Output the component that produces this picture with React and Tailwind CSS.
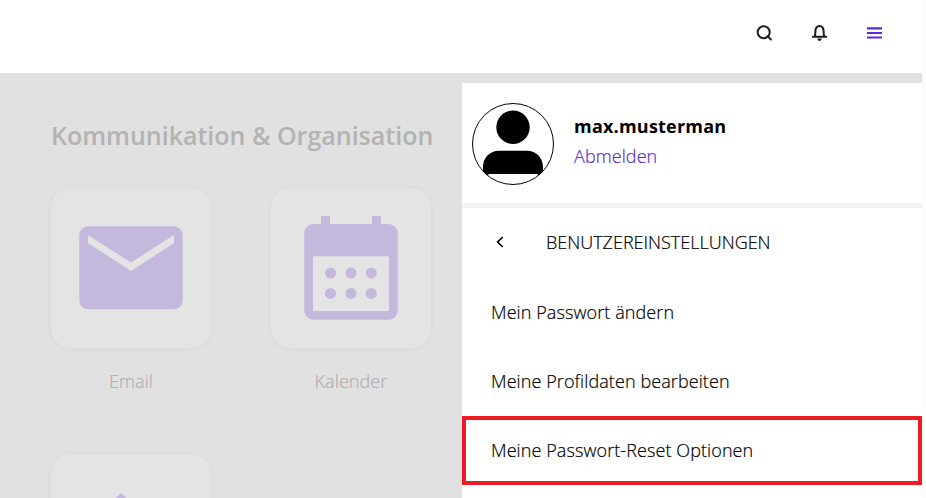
function Tile({ label, children }) {
  return (
    <div className="flex w-40 flex-col items-center">
      <div className="h-40 w-40 shrink-0 rounded-[20px] bg-[#e4e4e4] shadow-[0_1px_6px_rgba(0,0,0,0.045)]">
        <svg viewBox="0 0 160 160" className="h-40 w-40" fill="#c4b8dd">
          {children}
        </svg>
      </div>
      <span className="mt-5 text-[18px] font-light leading-[27px] tracking-[0.08px] text-[#b0b0b0] [-webkit-text-stroke:0.2px]">
        {label}
      </span>
    </div>
  );
}

function MenuRow({ label, highlighted }) {
  return (
    <li
      className={
        highlighted
          ? "flex h-[69px] items-center border-4 border-[#ed1c24] pl-[25px]"
          : "flex h-[69px] items-center pl-[29px]"
      }
    >
      <a className="whitespace-nowrap tracking-[0.09px]">{label}</a>
    </li>
  );
}

export default function App() {
  return (
    <div className="flex h-[498px] w-[926px] overflow-hidden bg-[#fcfcfc] font-['Open_Sans','Noto_Sans',sans-serif] text-black">
      <div className="flex w-[922px] flex-col bg-white">
        <header className="flex h-[73px] shrink-0 items-start justify-end pr-[39px] pt-[24px]">
          <div className="flex gap-[37px]">
            <svg viewBox="0 0 18 18" className="h-[18px] w-[18px]" fill="none" stroke="#1d1d1f" strokeWidth="2">
              <circle cx="8.7" cy="8.2" r="6" />
              <path d="M12.7 12.3l3.2 3.2" strokeLinecap="round" />
            </svg>
            <svg viewBox="0 0 18 18" className="h-[18px] w-[18px]" fill="none" stroke="#1d1d1f" strokeWidth="2">
              <path d="M2.8 12.8h13.4M4.6 12.6c.7-1.1.8-2.2.8-5C5.400 4 6.700 1.900 9.500 1.900s4.100 2.100 4.100 5.700c0 2.800.1 3.900.8 5" strokeLinecap="round" strokeLinejoin="round" />
              <path d="M7.300 14.600h4.400c-.2 1.600-1 2.400-2.200 2.400s-2-.8-2.200-2.400z" fill="#1d1d1f" stroke="none" />
            </svg>
            <svg viewBox="0 0 18 18" className="h-[18px] w-[18px]" fill="#5a2bd8">
              <path d="M2 3.300h15v2.100H2zM2 7.900h15v2.100H2zM2 12.500h15v2.100H2z" />
            </svg>
          </div>
        </header>

        <main className="flex h-[425px] bg-[#e1e1e1]">
          <section className="h-[425px] w-[462px] shrink-0 overflow-hidden pl-[51px] pt-[44px]">
            <h2 className="whitespace-nowrap text-[25px] font-semibold leading-[36px] text-[#b3b3b3]">
              Kommunikation &amp; Organisation
            </h2>
            <div className="mt-[35px] grid grid-cols-[160px_160px] gap-x-[60px] gap-y-[59px]">
              <Tile label="Email">
                <rect x="28.300" y="38.300" width="103.400" height="83" rx="9" />
                <path d="M37 47l43 27.500L123 47v8L80 83 37 55z" fill="#e4e4e4" />
              </Tile>
              <Tile label="Kalender">
                <path d="M50 28h9v10h-9zM101 28h9v10h-9z" />
                <rect x="33.300" y="36" width="93.400" height="95.700" rx="9" />
                <path d="M42 68.300h76V123H42z" fill="#e4e4e4" />
                <circle cx="59.500" cy="85" r="5.500" />
                <circle cx="80" cy="85" r="5.500" />
                <circle cx="100.300" cy="85" r="5.500" />
                <circle cx="59.500" cy="105.400" r="5.500" />
                <circle cx="80" cy="105.400" r="5.500" />
                <circle cx="100.300" cy="105.400" r="5.500" />
              </Tile>
              <Tile label="">
                <path d="M70 38.800l50 50-50 50-50-50z" />
              </Tile>
            </div>
          </section>

          <aside className="mt-[10px] h-[415px] w-[460px] bg-white text-[18px] font-light leading-[27px] [-webkit-text-stroke:0.2px]">
            <div className="flex h-[125px] border-b-[5px] border-[#f4f4f4] pl-[10px] pt-5">
              <svg viewBox="0 0 82 82" className="h-[82px] w-[82px] shrink-0">
                <circle cx="41" cy="41" r="40.500" fill="#fff" stroke="#000" />
                <circle cx="41" cy="24.300" r="16.700" />
                <path d="M11 68V64c0-9.500 7-16.300 16-16.300h28c9 0 16 6.800 16 16.300v4L67 72.500 65 71H17l-2 1.500z" />
              </svg>
              <div className="ml-5 mt-2 flex flex-col">
                <span className="font-bold leading-[30px] tracking-[0.22px] [-webkit-text-stroke:0]">max.musterman</span>
                <a className="leading-[30px] tracking-[0.09px] text-[#5a2bd8]">Abmelden</a>
              </div>
            </div>
            <nav>
              <div className="flex h-[70px] items-center pl-[34px]">
                <svg viewBox="0 0 8 12" className="mb-[2px] h-3 w-2" fill="none" stroke="#000" strokeWidth="1.7">
                  <path d="M6.700 1L1.600 6l5.100 5" />
                </svg>
                <span className="mb-[2px] ml-[42px]">BENUTZEREINSTELLUNGEN</span>
              </div>
              <ul>
                <MenuRow label="Mein Passwort ändern" />
                <MenuRow label="Meine Profildaten bearbeiten" />
                <MenuRow label="Meine Passwort-Reset Optionen" highlighted />
              </ul>
            </nav>
          </aside>
        </main>
      </div>
    </div>
  );
}
